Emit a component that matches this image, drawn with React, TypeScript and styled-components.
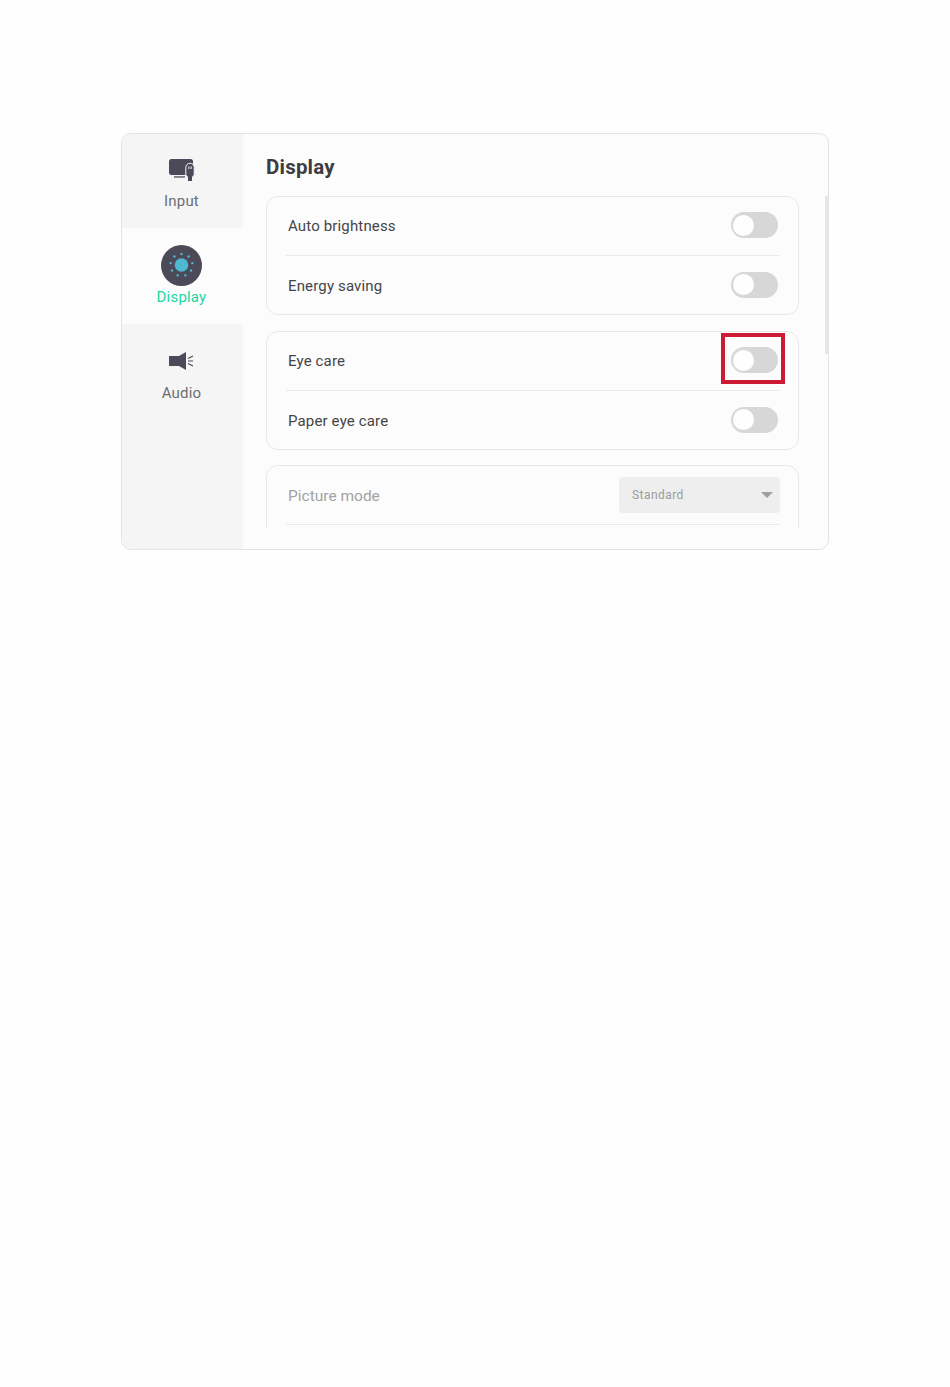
import React from 'react';
import styled, { createGlobalStyle } from 'styled-components';

const GlobalStyle = createGlobalStyle`
  html, body {
    margin: 0;
    padding: 0;
    background: #fefefe;
    font-family: Roboto, "Liberation Sans", sans-serif;
  }
`;

const Page = styled.div`
  height: 1387px;
  padding: 133px 121px 0;
  box-sizing: border-box;
`;

const Panel = styled.div`
  width: 708px;
  height: 417px;
  box-sizing: border-box;
  display: flex;
  border: 1px solid #e4e4e4;
  border-radius: 10px;
  background: #fcfcfc;
  overflow: hidden;
  position: relative;
`;

const Sidebar = styled.nav`
  width: 121px;
  flex-shrink: 0;
  margin-top: -2px;
  background: #f5f5f6;
`;

const Tab = styled.div<{ $active?: boolean }>`
  height: 96px;
  padding: ${p => (p.$active ? 16 : 22)}px 2px 0 0;
  box-sizing: border-box;
  display: flex;
  flex-direction: column;
  align-items: center;
  background: ${p => (p.$active ? '#fcfcfc' : 'transparent')};
  color: ${p => (p.$active ? '#1fd6a2' : '#6e6e70')};
  font-size: 15px;
  letter-spacing: 0.2px;
`;

const TabIcon = styled.div<{ $active?: boolean }>`
  height: ${p => (p.$active ? 42 : 32)}px;
  display: flex;
  align-items: center;
  justify-content: center;
  margin-bottom: ${p => (p.$active ? 2 : 6)}px;
`;

const Content = styled.main`
  flex: 1;
  padding-left: 23px;
  min-width: 0;
`;

const Title = styled.h1`
  margin: 0;
  height: 62px;
  padding-top: 21px;
  box-sizing: border-box;
  font-size: 20.5px;
  line-height: 24px;
  font-weight: 700;
  letter-spacing: 0.2px;
  color: #3d3d3f;
`;

const Scroller = styled.div`
  height: 332px;
  width: 533px;
  overflow: hidden;
  display: flex;
  flex-direction: column;
  gap: 15px;
`;

const Card = styled.section<{ $muted?: boolean }>`
  flex-shrink: 0;
  border: 1px solid #e8e8e8;
  border-radius: 12px;
  padding: 0 19px;
  box-sizing: border-box;
  width: 533px;
  height: ${p => (p.$muted ? 120 : 119)}px;

  &:first-child {
    margin-bottom: 1px;
  }
`;

const Row = styled.div<{ $divider?: boolean }>`
  height: ${p => (p.$divider ? '58px' : '59.8px')};
  display: flex;
  align-items: center;
  justify-content: space-between;
  padding-left: 2px;
  border-bottom: ${p => (p.$divider ? '1.5px solid #e9e9e9' : 'none')};
`;

const Label = styled.span<{ $muted?: boolean }>`
  font-size: ${p => (p.$muted ? 15.5 : 15)}px;
  color: ${p => (p.$muted ? '#a3a3a3' : '#454547')};
  letter-spacing: ${p => (p.$muted ? 0 : 0.15)}px;
  padding-top: ${p => (p.$muted ? 2 : 0)}px;
`;

const ToggleTrack = styled.div`
  position: relative;
  width: 47px;
  height: 26px;
  border-radius: 13px;
  background: #d7d7d7;
  margin-right: 1px;
  flex-shrink: 0;
  top: -1px;
`;

const ToggleKnob = styled.div`
  position: absolute;
  left: 2px;
  top: 2.5px;
  width: 21px;
  height: 21px;
  border-radius: 50%;
  background: #fefefe;
`;

const Select = styled.div`
  width: 161px;
  height: 36px;
  box-sizing: border-box;
  padding: 0 7px 0 13px;
  display: flex;
  align-items: center;
  justify-content: space-between;
  border-radius: 4px;
  background: #eeeeee;
  color: #9c9c9c;
  font-size: 12px;
  letter-spacing: 0.45px;
  margin-right: -1px;
`;

const Caret = styled.span`
  width: 0;
  height: 0;
  border-left: 6px solid transparent;
  border-right: 6px solid transparent;
  border-top: 6px solid #a0a0a0;
`;

const ScrollThumb = styled.div`
  position: absolute;
  right: 0;
  top: 62px;
  width: 3px;
  height: 158px;
  background: #e6e6e6;
`;

const Highlight = styled.div`
  position: absolute;
  left: 599px;
  top: 199px;
  width: 64px;
  height: 51px;
  box-sizing: border-box;
  border: 4px solid #cd1a35;
`;

const InputIcon = () => (
  <svg width="26" height="23" viewBox="0 0 26 23">
    <rect x="0" y="0" width="24" height="16" rx="2.500" fill="#4c4a58" />
    <rect x="5" y="17.300" width="11" height="1.300" fill="#4c4a58" />
    <path
      d="M16.800 8.500a4.200 4.200 0 0 1 8.400 0V16l-1.700 2v4.500h-5V18l-1.700-2z"
      fill="#4c4a58"
      stroke="#f5f5f6"
      strokeWidth="1"
    />
    <rect x="19.400" y="7.500" width="1" height="2.500" fill="#f5f5f6" />
    <rect x="21.600" y="7.500" width="1" height="2.500" fill="#f5f5f6" />
  </svg>
);

const DisplayIcon = () => {
  // nine dots around the sun, one of them straight above it
  const dots = Array.from({ length: 9 }, (_, i) => {
    const a = (i * 2 * Math.PI) / 9 - Math.PI / 2;
    return { x: 20.500 + Math.cos(a) * 11, y: 20 + Math.sin(a) * 11 };
  });
  return (
    <svg width="41" height="41" viewBox="0 0 41 41">
      <circle cx="20.500" cy="20.500" r="20.500" fill="#4c4a58" />
      <circle cx="20.500" cy="20" r="6.800" fill="#4db8d0" />
      {dots.map((d, i) => (
        <circle key={i} cx={d.x} cy={d.y} r="1.200" fill="#4db8d0" />
      ))}
    </svg>
  );
};

const AudioIcon = () => (
  <svg width="25" height="20" viewBox="0 0 25 20">
    <path d="M0 4h10L17 0v18l-7-4H0z" fill="#4c4a58" />
    <path d="M19 6.500l5-2.500M19 9h5M19 11.500l5 2.500" stroke="#4c4a58" strokeWidth="1.200" fill="none" />
  </svg>
);

const Toggle = () => (
  <ToggleTrack>
    <ToggleKnob />
  </ToggleTrack>
);

const App: React.FC = () => {
  return (
    <Page>
      <GlobalStyle />
      <Panel>
        <Sidebar>
          <Tab>
            <TabIcon><InputIcon /></TabIcon>
            Input
          </Tab>
          <Tab $active>
            <TabIcon $active><DisplayIcon /></TabIcon>
            Display
          </Tab>
          <Tab>
            <TabIcon><AudioIcon /></TabIcon>
            Audio
          </Tab>
        </Sidebar>
        <Content>
          <Title>Display</Title>
          <Scroller>
            <Card>
              <Row $divider><Label>Auto brightness</Label><Toggle /></Row>
              <Row><Label>Energy saving</Label><Toggle /></Row>
            </Card>
            <Card>
              <Row $divider><Label>Eye care</Label><Toggle /></Row>
              <Row><Label>Paper eye care</Label><Toggle /></Row>
            </Card>
            <Card $muted>
              <Row $divider>
                <Label $muted>Picture mode</Label>
                <Select>Standard<Caret /></Select>
              </Row>
            </Card>
          </Scroller>
        </Content>
        <ScrollThumb />
        <Highlight />
      </Panel>
    </Page>
  );
};

export default App;
